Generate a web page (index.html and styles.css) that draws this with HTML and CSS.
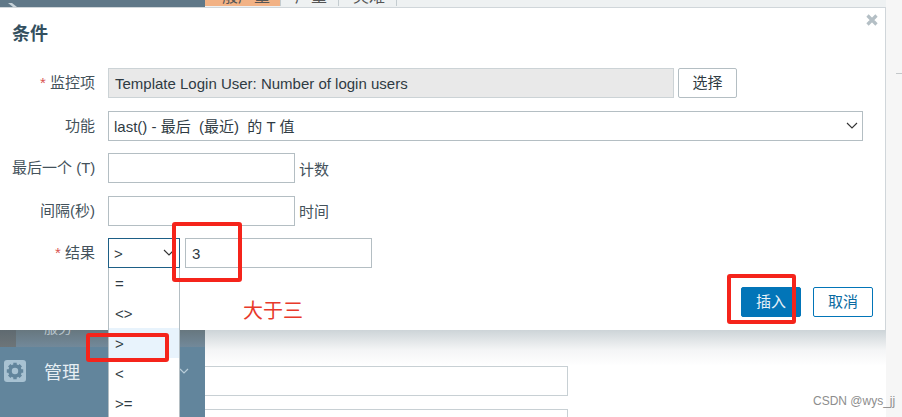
FILE: index.html
```html
<!doctype html>
<html>

<head>
    <meta charset="UTF-8">
    <title>条件</title>
    <link rel="stylesheet" href="styles.css">
</head>

<body>
    <div class="page">
        <!-- page behind the dialog -->
        <div class="sidebar">
            <div class="side-top">
                <svg class="side-logo" width="10" height="4" viewBox="0 0 10 4"><path d="M0 0h4l5 4H5z" fill="#c6d2d9"/></svg>
            </div>
            <div class="nav-sub"><div class="nav-sub-inner"><span class="nav-sub-text">服务</span></div></div>
            <div class="nav-item">
                <svg class="nav-icon" width="22" height="22" viewBox="0 0 22 22">
                    <rect width="22" height="22" rx="3" fill="#a8c2d2"/>
                    <circle cx="11" cy="11" r="5" fill="none" stroke="#62859c" stroke-width="3.6"/>
                    <g stroke="#62859c" stroke-width="3.4">
                        <path d="M11 2.8v3M11 16.2v3M2.8 11h3M16.2 11h3M5.2 5.2l2.1 2.1M14.7 14.7l2.1 2.1M16.8 5.2l-2.1 2.1M7.3 14.7l-2.1 2.1"/>
                    </g>
                </svg>
                <span class="nav-text">管理</span>
                <svg class="nav-arrow" width="10" height="6" viewBox="0 0 10 6"><path d="M1 1l4 4 4-4" fill="none" stroke="#b9cdd9" stroke-width="1.2"/></svg>
            </div>
        </div>
        <div class="main">
            <div class="tabs">
                <div class="tab tab-on"><span class="tab-text">一般严重</span></div>
                <div class="tab tab-mid"><span class="tab-text">严重</span></div>
                <div class="tab tab-mid"><span class="tab-text">灾难</span></div>
            </div>
            <div class="bg-field"></div>
            <div class="bg-field"></div>
        </div>
        <div class="rail"><div class="rail-line"></div></div>

        <!-- dialog -->
        <div class="dialog">
            <svg class="close" width="12" height="12" viewBox="0 0 12 12"><path d="M1.5 1.5l9 9M10.5 1.5l-9 9" stroke="#b4bfc5" stroke-width="3.2"/></svg>
            <div class="dialog-title">条件</div>
            <div class="form">
                <div class="label"><span class="req">*</span> 监控项</div>
                <div class="row">
                    <div class="field field-ro">Template Login User: Number of login users</div>
                    <div class="btn-plain">选择</div>
                </div>

                <div class="label">功能</div>
                <div class="row">
                    <div class="field field-select">last() - 最后  (最近)  的 T 值<svg class="chev" width="12" height="7" viewBox="0 0 12 7"><path d="M1 1l5 5 5-5" fill="none" stroke="#333" stroke-width="1.1"/></svg></div>
                </div>

                <div class="label">最后一个 (T)</div>
                <div class="row">
                    <div class="field field-short"></div>
                    <span class="unit">计数</span>
                </div>

                <div class="label">间隔(秒)</div>
                <div class="row">
                    <div class="field field-short"></div>
                    <span class="unit">时间</span>
                </div>

                <div class="label"><span class="req">*</span> 结果</div>
                <div class="row row-result">
                    <div class="op-wrap">
                        <div class="field field-op">&gt;
                            <svg class="chev" width="12" height="7" viewBox="0 0 12 7"><path d="M1 1l5 5 5-5" fill="none" stroke="#333" stroke-width="1.1"/></svg>
                        </div>
                        <div class="op-list">
                            <div class="op">=</div>
                            <div class="op">&lt;&gt;</div>
                            <div class="op op-on">&gt;</div>
                            <div class="op">&lt;</div>
                            <div class="op">&gt;=</div>
                        </div>
                    </div>
                    <div class="field field-short">3</div>
                </div>
            </div>
            <div class="dialog-foot">
                <div class="btn btn-primary">插入</div>
                <div class="btn btn-cancel">取消</div>
            </div>
        </div>

        <!-- red marks drawn on the screenshot -->
        <div class="mark mark-value"></div>
        <div class="mark mark-insert"></div>
        <div class="mark mark-option"></div>
        <div class="note">大于三</div>
        <div class="watermark">CSDN @wys_jj</div>
    </div>
</body>

</html>
```

FILE: styles.css
```css
* {
    box-sizing: border-box;
}

body {
    margin: 0;
    overflow: hidden;
    background: #fff;
    font-family: "Liberation Sans", "Noto Sans CJK SC", sans-serif;
    font-size: 15px;
    color: #3a4a54;
}

.page {
    position: relative;
    display: flex;
    width: 902px;
    height: 417px;
    overflow: hidden;
}

/* background page */
.sidebar {
    width: 205px;
    background: #62859c;
    flex-shrink: 0;
}

.side-top {
    height: 7px;
    margin-bottom: 323px;
    padding: 3px 0 0 8px;
    background: #607888;
}

.side-logo {
    display: block;
}

.nav-sub {
    height: 17px;
    padding-left: 16px;
    background: linear-gradient(#5f6a70, #6d7579);
}

.nav-sub-inner {
    height: 17px;
    padding-left: 28px;
    background: linear-gradient(#67777f, #72899a);
    overflow: hidden;
}

.nav-sub-text {
    display: block;
    margin-top: -9px;
    font-size: 14px;
    line-height: 14px;
    color: #b9c5cc;
}

.nav-item {
    display: flex;
    align-items: center;
    height: 48px;
    padding-left: 4px;
}

.nav-text {
    margin-left: 18px;
    font-size: 18px;
    color: #e6eef3;
}

.nav-arrow {
    margin-left: 99px;
}

.main {
    flex: 1;
    background: linear-gradient(#cdd4d8 330px, #f4f5f6 350px, #fff 366px);
}

.tabs {
    display: flex;
    height: 7px;
    overflow: hidden;
    background: #eef1f2;
}

.tab {
    height: 6px;
    border-right: 1px solid #c4ccd0;
    overflow: hidden;
}

.tab-text {
    display: block;
    margin-top: -11px;
    font-size: 16px;
    line-height: 16px;
    color: #555;
    white-space: nowrap;
}

.tab-on {
    width: 76px;
    padding: 0 1px;
    background: #f2b285;
}

.tab-mid {
    width: 58px;
    padding: 0 14px;
}

.bg-field {
    width: 363px;
    height: 30px;
    margin-top: 13px;
    border: 1px solid #c8d0d4;
    border-left: 0;
    background: #fff;
}

.tabs + .bg-field {
    margin-top: 359px;
}

.rail {
    width: 16px;
    background: #f6f6f6;
    flex-shrink: 0;
    padding: 73px 0 0 10px;
}

.rail-line {
    height: 1px;
    background: #c4c8ca;
}

/* dialog */
.dialog {
    position: absolute;
    top: 7px;
    left: 0;
    width: 886px;
    height: 323px;
    padding: 0 12px;
    background: #fff;
    border-top: 1px solid #d0d6da;
    border-right: 1px solid #d0d6da;
}

.close {
    position: absolute;
    top: 6px;
    right: 7px;
}

.dialog-title {
    height: 60px;
    padding-top: 14px;
    font-size: 18px;
    line-height: 24px;
    font-weight: bold;
    color: #34505f;
}

.form {
    display: grid;
    grid-template-columns: 83px 1fr;
    grid-auto-rows: 30px;
    column-gap: 13px;
    row-gap: 12.5px;
}

.label {
    text-align: right;
    line-height: 30px;
    color: #44525b;
    white-space: nowrap;
}

.req {
    color: #d9534f;
}

.row {
    display: flex;
    align-items: center;
    gap: 4px;
}

.row-result {
    gap: 5px;
}

.field {
    position: relative;
    height: 30px;
    padding: 1px 6px 0;
    border: 1px solid #b4bec3;
    background: #fff;
    line-height: 28px;
    color: #2f3b43;
}

.field-ro {
    width: 566px;
    border-color: #ccd3d6;
    background: #e9e9e9;
}

.field-select {
    width: 755px;
    padding: 1px 5px 0;
    white-space: pre;
}

.field-short {
    width: 187px;
}

.field-op {
    width: 72px;
    padding: 1px 5px 0;
    border-color: #1d5f86;
}

.chev {
    position: absolute;
    top: 10px;
    right: 4px;
}

.unit {
    color: #44525b;
}

.btn-plain {
    width: 59px;
    height: 30px;
    border: 1px solid #b4bec3;
    border-radius: 2px;
    text-align: center;
    line-height: 28px;
    color: #2f3b43;
}

.op-wrap {
    position: relative;
    width: 72px;
    height: 30px;
}

.op-list {
    position: absolute;
    top: 30px;
    left: 0;
    width: 72px;
    height: 160px;
    background: #fff;
    border: 1px solid #b4bec3;
    border-top: 0;
}

.op {
    height: 30px;
    padding: 2px 0 0 6px;
    line-height: 28px;
    color: #2f3b43;
}

.op-on {
    background: #e8f3fc;
}

.dialog-foot {
    display: flex;
    justify-content: flex-end;
    gap: 12px;
    margin-top: 19px;
}

.btn {
    width: 60px;
    height: 30px;
    border: 1px solid #0275b8;
    border-radius: 2px;
    text-align: center;
    line-height: 28px;
}

.btn-primary {
    background: #0275b8;
    color: #e8f2f8;
}

.btn-cancel {
    background: #fff;
    color: #0a6aa1;
}

/* annotations */
.mark {
    position: absolute;
    border: 4px solid #f5241b;
    border-radius: 3px;
}

.mark-value {
    top: 222px;
    left: 172px;
    width: 70px;
    height: 60px;
}

.mark-insert {
    top: 274px;
    left: 727px;
    width: 69px;
    height: 50px;
}

.mark-option {
    top: 333px;
    left: 86px;
    width: 83px;
    height: 29px;
}

.note {
    position: absolute;
    top: 296px;
    left: 243px;
    font-size: 20px;
    line-height: 30px;
    color: #e8392a;
}

.watermark {
    position: absolute;
    top: 393px;
    left: 813px;
    font-size: 12px;
    line-height: 16px;
    color: #8d8d8d;
    white-space: nowrap;
}
```
